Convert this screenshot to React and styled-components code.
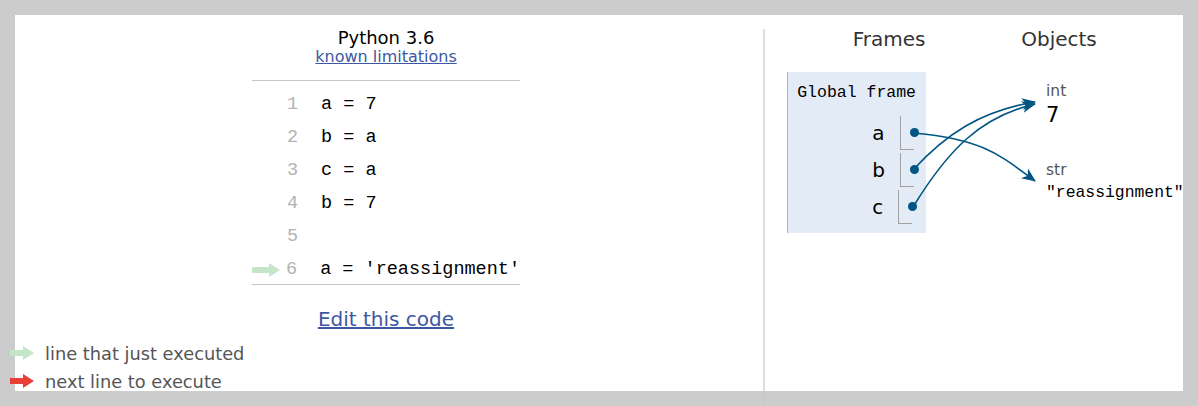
import React from "react";
import styled, { createGlobalStyle } from "styled-components";

const Global = createGlobalStyle`
  html, body { margin: 0; padding: 0; background: #cccccc; }
  body { font-family: "DejaVu Sans", Verdana, sans-serif; }
`;

const Page = styled.div`
  padding: 15px;
  width: 1198px;
  height: 406px;
  box-sizing: border-box;
  overflow: hidden;
`;

const Sheet = styled.div`
  position: relative;
  width: 1168px;
  height: 376px;
  background: #ffffff;
  display: flex;
`;

const LeftColumn = styled.div`
  flex: none;
  width: 742px;
  display: flex;
  flex-direction: column;
  align-items: center;
  padding-top: 13px;
  box-sizing: border-box;
`;

const Title = styled.div`
  font-size: 18px;
  line-height: 20px;
  color: #000;
`;

const SmallLink = styled.a`
  font-size: 16px;
  line-height: 18px;
  color: #3d58a2;
  text-decoration: underline;
`;

const CodeTable = styled.div`
  margin-top: 14px;
  width: 268px;
  border-top: 1px solid #c4c4c4;
  border-bottom: 1px solid #c4c4c4;
  padding-top: 5px;
  box-sizing: border-box;
`;

const CodeRow = styled.div`
  display: flex;
  align-items: center;
  height: 33px;
  box-sizing: border-box;
  padding-top: 4px;
  font-family: "Liberation Mono", "DejaVu Sans Mono", monospace;
  font-size: 18.5px;
`;

const ArrowCell = styled.div`
  width: 30px;
  display: flex;
  align-items: center;
`;

const LineNo = styled.div`
  width: 16px;
  text-align: right;
  color: #b3b3b3;
`;

const CodeText = styled.div`
  margin-left: 23px;
  color: #000;
  white-space: pre;
`;

const EditLink = styled.a`
  margin-top: 22px;
  font-size: 20px;
  line-height: 24px;
  color: #3d58a2;
  text-decoration: underline;
`;

const Legend = styled.div`
  align-self: flex-start;
  margin-left: -5px;
  margin-top: 8px;
  display: flex;
  flex-direction: column;
`;

const LegendRow = styled.div`
  display: flex;
  align-items: center;
  height: 28px;
  font-size: 17.8px;
  color: #555;
  gap: 11px;
`;

const Divider = styled.div`
  margin-left: 6px;
  margin-top: 14px;
  width: 2px;
  height: 377px;
  background: rgba(200, 200, 200, 0.6);
  flex: none;
`;

const RightPanel = styled.div`
  flex: 1;
  min-width: 0;
  padding-top: 13px;
  display: flex;
  flex-direction: column;
`;

const HeaderRow = styled.div`
  display: flex;
  padding-left: 54px;
  gap: 30px;
`;

const Heading = styled.div`
  width: 140px;
  text-align: center;
  font-size: 20px;
  line-height: 22px;
  color: #333;
`;

const Body = styled.div`
  display: flex;
  margin-top: 22px;
  padding-left: 22px;
`;

const FrameBox = styled.div`
  flex: none;
  width: 139px;
  height: 161px;
  box-sizing: border-box;
  background: #e2ebf6;
  border-left: 1px solid #a6b3b6;
  padding: 11px 12px 0 0;
  display: flex;
  flex-direction: column;
  align-items: flex-end;
`;

const FrameTitle = styled.div`
  font-family: "Liberation Mono", "DejaVu Sans Mono", monospace;
  font-size: 16.5px;
  line-height: 20px;
  color: #000;
  margin-right: -2px;
`;

const VarList = styled.div`
  margin-top: 13px;
  display: flex;
  flex-direction: column;
  gap: 3px;
`;

const VarRow = styled.div`
  display: flex;
  align-items: center;
  height: 34px;
`;

const VarName = styled.div`
  font-size: 20px;
  color: #000;
  margin-right: 15px;
`;

const PointerCell = styled.div`
  width: 14px;
  height: 34px;
  box-sizing: border-box;
  border-left: 1px solid #a0a0a0;
  border-bottom: 1px solid #a0a0a0;
  display: flex;
  align-items: center;
  justify-content: flex-end;
`;

const Dot = styled.div`
  width: 9px;
  height: 9px;
  border-radius: 50%;
  background: #005583;
  margin-right: -5px;
  margin-top: -1px;
  flex: none;
`;

const Objects = styled.div`
  flex: none;
  margin-left: 120px;
  margin-top: 10px;
  display: flex;
  flex-direction: column;
`;

const TypeLabel = styled.div`
  font-size: 15.5px;
  line-height: 18px;
  color: #555;
  margin-top: ${(p) => p.$gap || 0}px;
`;

const IntValue = styled.div`
  margin-top: 2px;
  font-size: 21px;
  line-height: 26px;
  color: #000;
`;

const StrValue = styled.div`
  margin-top: 3px;
  font-family: "Liberation Mono", "DejaVu Sans Mono", monospace;
  font-size: 16.4px;
  line-height: 22px;
  color: #000;
  white-space: pre;
`;

const Overlay = styled.svg`
  position: absolute;
  left: 0;
  top: 0;
  pointer-events: none;
  overflow: visible;
`;

const BlockArrow = ({ color, w = 28 }) => (
  <svg width={w} height="14" viewBox={`0 0 ${w} 14`}>
    <rect x="0" y="4" width={w - 10} height="6" fill={color} />
    <polygon points={`${w - 11},0 ${w},7 ${w - 11},14`} fill={color} />
  </svg>
);

const code = ["a = 7", "b = a", "c = a", "b = 7", "", "a = 'reassignment'"];

export default function App() {
  return (
    <>
      <Global />
      <Page>
        <Sheet>
          <LeftColumn>
            <Title>Python 3.6</Title>
            <SmallLink href="#">known limitations</SmallLink>
            <CodeTable>
              {code.map((c, i) => (
                <CodeRow key={i}>
                  <ArrowCell>{i === 5 && <BlockArrow color="#c5e5c9" w={28} />}</ArrowCell>
                  <LineNo>{i + 1}</LineNo>
                  <CodeText>{c}</CodeText>
                </CodeRow>
              ))}
            </CodeTable>
            <EditLink href="#">Edit this code</EditLink>
            <Legend>
              <LegendRow>
                <BlockArrow color="#c5e5c9" w={24} />
                line that just executed
              </LegendRow>
              <LegendRow>
                <BlockArrow color="#e93f34" w={24} />
                next line to execute
              </LegendRow>
            </Legend>
          </LeftColumn>
          <Divider />
          <RightPanel>
            <HeaderRow>
              <Heading>Frames</Heading>
              <Heading>Objects</Heading>
            </HeaderRow>
            <Body>
              <FrameBox>
                <FrameTitle>Global frame</FrameTitle>
                <VarList>
                  {["a", "b", "c"].map((v) => (
                    <VarRow key={v}>
                      <VarName>{v}</VarName>
                      <PointerCell>
                        <Dot />
                      </PointerCell>
                    </VarRow>
                  ))}
                </VarList>
              </FrameBox>
              <Objects>
                <TypeLabel>int</TypeLabel>
                <IntValue>7</IntValue>
                <TypeLabel $gap={33}>str</TypeLabel>
                <StrValue>"reassignment"</StrValue>
              </Objects>
            </Body>
          </RightPanel>
          <Overlay width="1168" height="376" viewBox="15 15 1168 376">
            <defs>
              <marker
                id="head"
                viewBox="0 0 14 12"
                refX="13"
                refY="6"
                markerWidth="14"
                markerHeight="12"
                markerUnits="userSpaceOnUse"
                orient="auto"
              >
                <path d="M0,0 L14,6 L0,12 L4,6 Z" fill="#005583" />
              </marker>
            </defs>
            <g fill="none" stroke="#005583" strokeWidth="1.6">
              <path d="M913,133 C985,139 1002,157 1035,181" markerEnd="url(#head)" />
              <path d="M913,170 C945,135 980,111 1035,102" markerEnd="url(#head)" />
              <path d="M913,207 C948,150 980,117 1035,104" markerEnd="url(#head)" />
            </g>
          </Overlay>
        </Sheet>
      </Page>
    </>
  );
}
